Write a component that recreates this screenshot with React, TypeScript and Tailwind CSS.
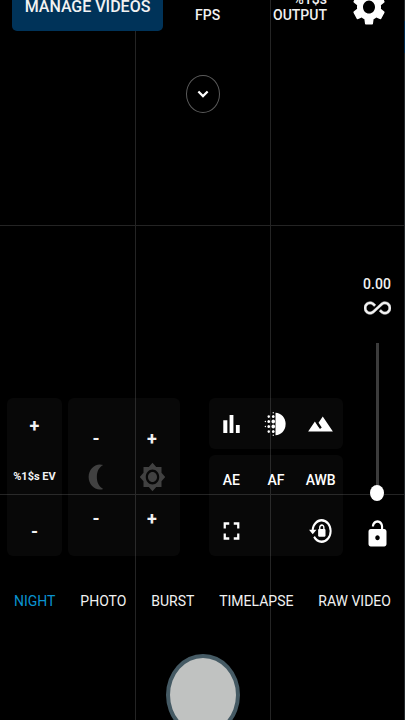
import React from "react";

const MODES = ["NIGHT", "PHOTO", "BURST", "TIMELAPSE", "RAW VIDEO"];

function Icon({
  children,
  className = "h-[30px] w-[27px]",
  viewBox = "0 0 24 24",
}: {
  children: React.ReactNode;
  className?: string;
  viewBox?: string;
}) {
  return (
    <svg
      viewBox={viewBox}
      preserveAspectRatio="none"
      fill="currentColor"
      aria-hidden="true"
      className={`${className} shrink-0`}
    >
      {children}
    </svg>
  );
}

function GridLines() {
  return (
    <div
      aria-hidden="true"
      className="pointer-events-none absolute inset-x-0 -top-11 -bottom-[43px] grid grid-cols-3 grid-rows-3"
    >
      {Array.from({ length: 9 }, (_, i) => (
        <div
          key={i}
          className={`border-[#242424] ${i % 3 ? "border-l" : ""} ${i > 2 ? "border-t" : ""}`}
        />
      ))}
    </div>
  );
}

function Step({ sign, label }: { sign: string; label: string }) {
  return (
    <button
      type="button"
      aria-label={label}
      className="flex items-center justify-center pt-1 text-lg leading-5 font-bold"
    >
      {sign}
    </button>
  );
}

function Tool({ label, children }: { label: string; children: React.ReactNode }) {
  return (
    <button
      type="button"
      aria-label={label}
      className="flex items-center justify-center text-sm font-medium"
    >
      {children}
    </button>
  );
}

export default function App() {
  return (
    <div className="relative h-screen overflow-hidden bg-black font-['Roboto','Noto_Sans',sans-serif] text-[#f2f2f2]">
      <GridLines />
      <div
        aria-hidden="true"
        className="absolute inset-y-0 right-0 w-px bg-[#23282b] pt-[21px]"
      >
        <div className="h-8 bg-[#00294d]" />
      </div>

      <div className="relative z-10 flex h-full flex-col">
        <header className="-mt-[17px] flex h-12 shrink-0 items-center pl-3">
          <button
            type="button"
            className="h-12 w-[151px] rounded-[5px] bg-[#003359] text-base font-medium whitespace-nowrap"
          >
            MANAGE VIDEOS
          </button>
          <div className="ml-8 h-8 text-right text-sm leading-4 font-medium">
            <div>&nbsp;</div>
            <div>FPS</div>
          </div>
          <div className="ml-auto h-8 text-right text-sm leading-4 font-medium">
            <div>%1$s</div>
            <div>OUTPUT</div>
          </div>
          <button type="button" aria-label="Settings" className="mr-4 ml-[22px] text-white">
            <Icon className="h-11 w-10">
              <path d="M19.14 12.94c.04-.3.06-.61.06-.94 0-.32-.02-.64-.07-.94l2.03-1.58c.18-.14.23-.41.12-.61l-1.92-3.32c-.12-.22-.37-.29-.59-.22l-2.39.96c-.5-.38-1.03-.7-1.62-.94l-.36-2.54c-.04-.24-.24-.41-.48-.41h-3.84c-.24 0-.43.17-.47.41l-.36 2.54c-.59.24-1.13.57-1.62.94l-2.39-.96c-.22-.08-.47 0-.59.22L2.74 8.87c-.12.21-.08.47.12.61l2.03 1.58c-.05.3-.09.63-.09.94s.02.64.07.94l-2.03 1.58c-.18.14-.23.41-.12.61l1.92 3.32c.12.22.37.29.59.22l2.39-.96c.5.38 1.03.7 1.62.94l.36 2.54c.05.24.24.41.48.41h3.84c.24 0 .44-.17.47-.41l.36-2.54c.59-.24 1.13-.56 1.62-.94l2.39.96c.22.08.47 0 .59-.22l1.92-3.32c.12-.22.07-.47-.12-.61l-2.01-1.58zM12 15.6c-1.98 0-3.6-1.62-3.6-3.6s1.62-3.6 3.6-3.6 3.6 1.62 3.6 3.6-1.62 3.6-3.6 3.6z" />
            </Icon>
          </button>
        </header>

        <button
          type="button"
          aria-label="Show more"
          className="mt-11 flex h-[38px] w-[34px] shrink-0 items-center justify-center self-center rounded-[50%] border border-[#5a5a5a] text-white"
        >
          <Icon className="h-5 w-5">
            <path d="M7.4 8.6 12 13.2l4.6-4.6L18.5 10.5 12 17l-6.5-6.5z" transform="translate(0 -.5)" />
          </Icon>
        </button>

        <main className="mt-auto flex shrink-0 items-end pl-[7px]">
          <section
            aria-label="Exposure compensation"
            className="grid h-[158px] flex-[55] grid-rows-3 rounded-md bg-white/3"
          >
            <Step sign="+" label="Increase EV" />
            <div className="flex items-center justify-center text-[11px] font-bold whitespace-nowrap">
              %1$s EV
            </div>
            <Step sign="-" label="Decrease EV" />
          </section>

          <section
            aria-label="Shadows and highlights"
            className="ml-1.5 grid h-[158px] flex-[112] auto-rows-[40px] grid-cols-2 content-center rounded-md bg-white/3"
          >
            <Step sign="-" label="Decrease shadows" />
            <Step sign="+" label="Increase shadows" />
            <div className="flex items-center justify-center text-[#414141]">
              <Icon>
                <path
                  transform="translate(24 0) scale(-1 1)"
                  d="M9 2c-1.05 0-2.05.16-3 .46C9.6 4 11.7 7.6 11.7 12S9.6 20 6 21.54c.95.3 1.95.46 3 .46 5.52 0 10-4.48 10-10S14.52 2 9 2z"
                />
              </Icon>
            </div>
            <div className="flex items-center justify-center text-[#414141]">
              <Icon>
                <path d="M20 8.69V4h-4.69L12 .69 8.69 4H4v4.69L.69 12 4 15.31V20h4.69L12 23.31 15.31 20H20v-4.69L23.31 12 20 8.69zM12 18c-3.31 0-6-2.69-6-6s2.69-6 6-6 6 2.69 6 6-2.69 6-6 6zm0-10c-2.21 0-4 1.79-4 4s1.79 4 4 4 4-1.79 4-4-1.79-4-4-4z" />
              </Icon>
            </div>
            <Step sign="-" label="Decrease highlights" />
            <Step sign="+" label="Increase highlights" />
          </section>

          <div className="mr-1.5 ml-[29px] flex flex-[134] flex-col gap-1.5 text-white">
            <section aria-label="Overlays" className="grid h-[51px] grid-cols-3 rounded-md bg-white/3">
              <Tool label="Histogram">
                <Icon>
                  <path d="M4.7 9H8.3V19.2H4.7zM10.3 4.8h3.4v14.4h-3.4zm5.6 8H19.3v6.4h-3.4z" />
                </Icon>
              </Tool>
              <Tool label="Focus peaking">
                <Icon>
                  <path d="M12 3v18c4.97 0 9-4.03 9-9s-4.03-9-9-9z" />
                  <circle cx="6" cy="14" r="1.2" />
                  <circle cx="6" cy="18" r="1.1" />
                  <circle cx="6" cy="10" r="1.2" />
                  <circle cx="3" cy="10" r=".6" />
                  <circle cx="6" cy="6" r="1.1" />
                  <circle cx="3" cy="14" r=".6" />
                  <circle cx="10" cy="21" r=".6" />
                  <circle cx="10" cy="3" r=".6" />
                  <circle cx="10" cy="6" r="1.2" />
                  <circle cx="10" cy="14" r="1.6" />
                  <circle cx="10" cy="10" r="1.6" />
                  <circle cx="10" cy="18" r="1.2" />
                </Icon>
              </Tool>
              <Tool label="Exposure overlay">
                <Icon>
                  <path d="M14 6l-3.75 5 2.85 3.8-1.6 1.2C9.81 13.75 7 10 7 10l-6 8h22L14 6z" />
                </Icon>
              </Tool>
            </section>
            <section
              aria-label="Locks"
              className="grid h-[101px] grid-cols-3 grid-rows-2 rounded-md bg-white/3"
            >
              <Tool label="AE">AE</Tool>
              <Tool label="AF">AF</Tool>
              <Tool label="AWB">AWB</Tool>
              <Tool label="Fullscreen">
                <Icon>
                  <path d="M7 14H5v5h5v-2H7v-3zm-2-4h2V7h3V5H5v5zm12 7h-3v2h5v-5h-2v3zM14 5v2h3v3h2V5h-5z" />
                </Icon>
              </Tool>
              <div />
              <Tool label="Lock rotation">
                <Icon viewBox="-2 -0.5 27 25">
                  <path d="M12.63,2C18.16,2 22.64,6.5 22.64,12C22.64,17.5 18.16,22 12.63,22C9.12,22 6.05,20.18 4.26,17.43L5.84,16.18C7.25,18.47 9.76,20 12.64,20A8,8 0 0,0 20.64,12A8,8 0 0,0 12.64,4C8.56,4 5.2,7.06 4.71,11H7.47L3.73,14.73L0,11H2.69C3.19,5.95 7.45,2 12.63,2M15.59,10.24C16.09,10.25 16.5,10.65 16.5,11.16V15.77C16.5,16.27 16.09,16.69 15.58,16.69H10.05C9.54,16.69 9.13,16.27 9.13,15.77V11.16C9.13,10.65 9.54,10.25 10.04,10.24V9.23C10.04,7.7 11.29,6.46 12.81,6.46C14.34,6.46 15.59,7.7 15.59,9.23V10.24M12.81,7.86C12.06,7.86 11.44,8.47 11.44,9.23V10.24H14.19V9.23C14.19,7.86 13.57,7.86 12.81,7.86Z" />
                </Icon>
              </Tool>
            </section>
          </div>

          <div className="flex w-14 shrink-0 flex-col items-center">
            <label htmlFor="focus" className="text-sm leading-5 font-medium">
              0.00
            </label>
            <Icon className="h-7 w-[27px]">
              <path
                stroke="currentColor"
                strokeWidth=".4"
                d="M18.6 6.62c-1.44 0-2.8.56-3.77 1.53L12 10.66 10.48 12h.01L7.8 14.39c-.64.64-1.49.99-2.4.99-1.87 0-3.39-1.51-3.39-3.38S3.53 8.62 5.4 8.62c.91 0 1.76.35 2.44 1.03l1.13 1 1.51-1.34L9.22 8.2C8.2 7.18 6.84 6.62 5.4 6.62 2.42 6.62 0 9.04 0 12s2.42 5.38 5.4 5.38c1.44 0 2.8-.56 3.77-1.53l2.83-2.5.01.01L13.52 12h-.01l2.69-2.39c.64-.64 1.49-.99 2.4-.99 1.87 0 3.39 1.51 3.39 3.38s-1.52 3.38-3.39 3.38c-.9 0-1.76-.35-2.44-1.03l-1.14-1.01-1.51 1.34 1.27 1.12c1.02 1.01 2.37 1.57 3.82 1.57 2.98 0 5.4-2.41 5.4-5.38s-2.42-5.37-5.4-5.37z"
              />
            </Icon>
            <input
              id="focus"
              type="range"
              min={0}
              max={10}
              step={0.01}
              defaultValue={0}
              className="mt-[21px] h-[158px] w-3.5 appearance-none bg-[linear-gradient(#3c3c3c,#3c3c3c)] bg-[length:3px_95%] bg-top bg-no-repeat [direction:rtl] [writing-mode:vertical-lr] [&::-webkit-slider-thumb]:h-4 [&::-webkit-slider-thumb]:w-3.5 [&::-webkit-slider-thumb]:appearance-none [&::-webkit-slider-thumb]:rounded-[50%] [&::-webkit-slider-thumb]:bg-white"
            />
            <button type="button" aria-label="Unlock" className="mt-[18px] mb-[7px] text-white">
              <Icon>
                <path
                  fillRule="evenodd"
                  d="M12 17c1.1 0 2-.9 2-2s-.9-2-2-2-2 .9-2 2 .9 2 2 2zm6-9h-1V6c0-2.76-2.24-5-5-5S7 3.24 7 6h1.9c0-1.71 1.39-3.1 3.1-3.1 1.71 0 3.1 1.39 3.1 3.1v2H6c-1.1 0-2 .9-2 2v10c0 1.1.9 2 2 2h12c1.1 0 2-.9 2-2V10c0-1.1-.9-2-2-2z"
                />
              </Icon>
            </button>
          </div>
        </main>

        <nav aria-label="Capture mode" className="mt-[29px] flex h-8 shrink-0 items-center justify-between px-3.5">
          {MODES.map((mode, i) => (
            <button
              key={mode}
              type="button"
              className={`text-sm whitespace-nowrap ${i === 0 ? "text-[#0a93d0]" : ""}`}
            >
              {mode}
            </button>
          ))}
        </nav>

        <button
          type="button"
          aria-label="Shutter"
          className="mt-[37px] -mb-4 h-[82px] w-[74px] shrink-0 self-center rounded-[50%] border-4 border-[#455a64] bg-[#c0c2c1]"
        />
      </div>
    </div>
  );
}
